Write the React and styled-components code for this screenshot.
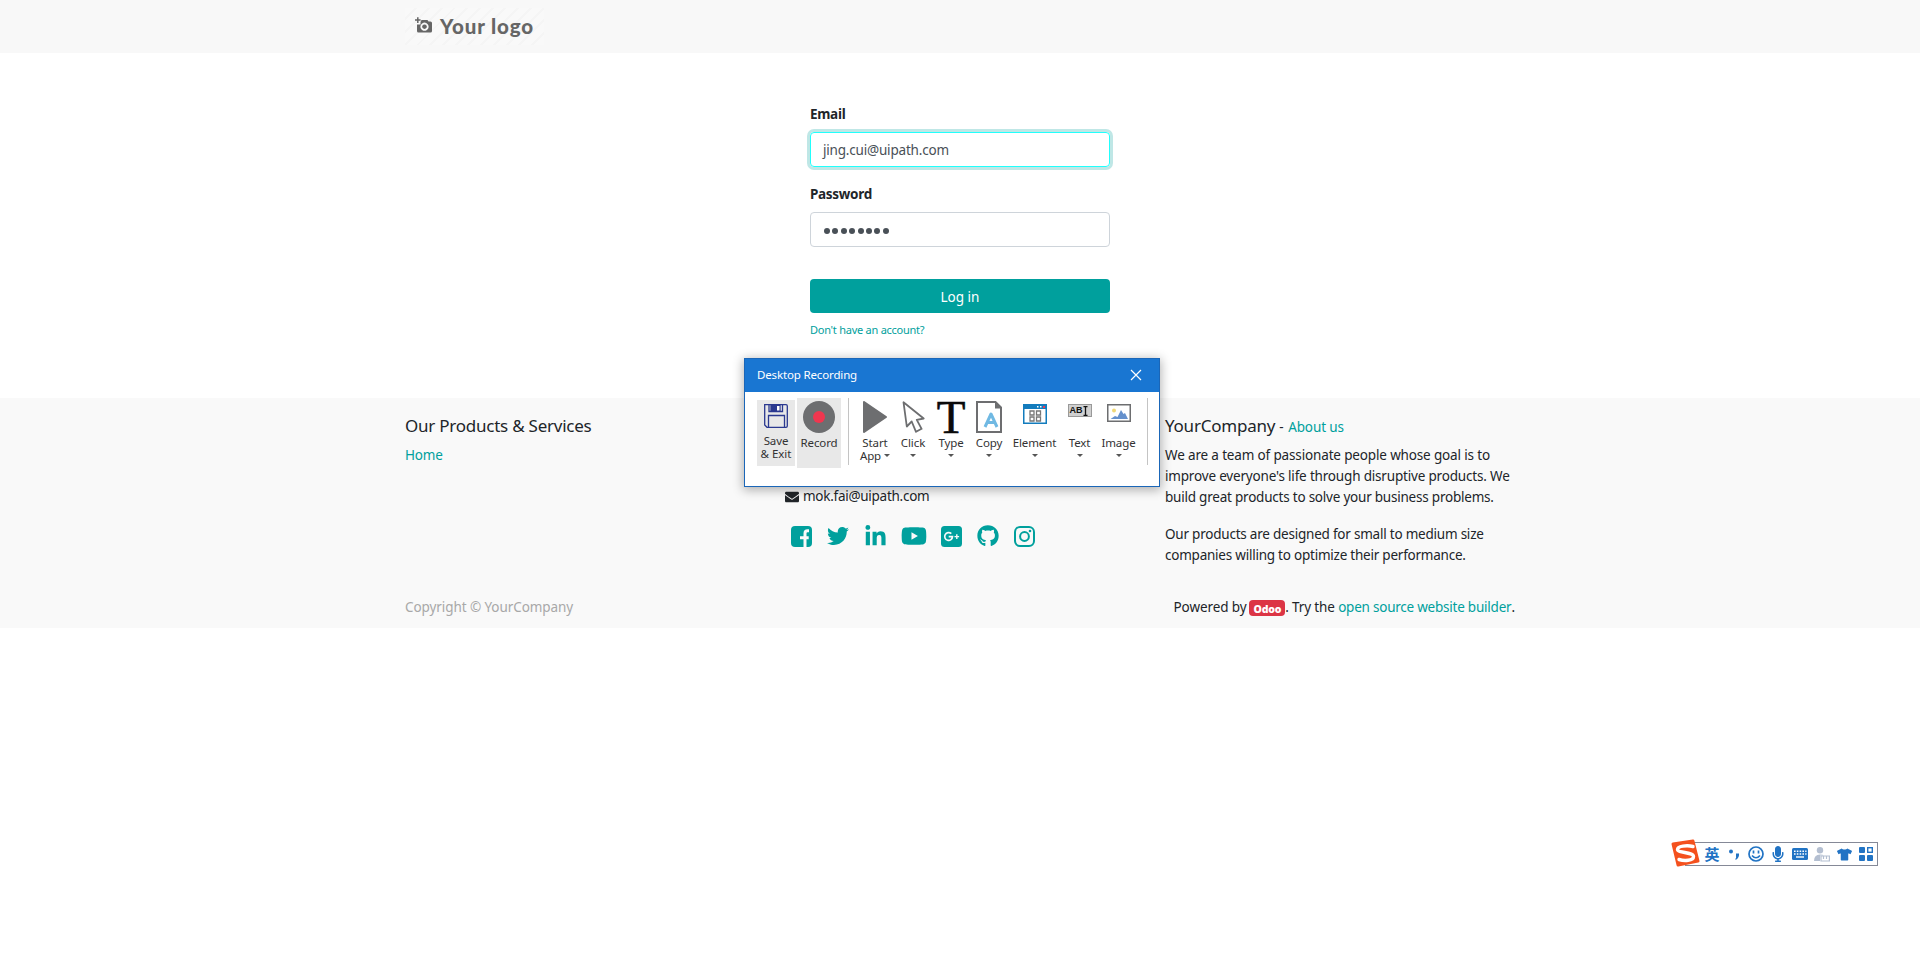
import React from 'react';
import styled, { createGlobalStyle, css } from 'styled-components';
import { FaTwitter, FaLinkedinIn, FaYoutube, FaGithub, FaEnvelope, FaTshirt, FaMicrophone } from 'react-icons/fa';

const TEAL = '#00a09d';

const Global = createGlobalStyle`
  * { box-sizing: border-box; }
  body { margin: 0; background: #fff; color: #212529; font: 14px/21px "Noto Sans", "Open Sans", "Noto Sans CJK SC", sans-serif; }
  h4, p, ul { margin: 0; padding: 0; font-weight: 400; list-style: none; }
  svg { display: block; flex: none; }
`;

/* One line of text; $s is the font size, $ls the tracking */
const Line = styled.span`
  display: inline-block;
  white-space: pre;
  font-size: ${(p) => p.$s || 13.5}px;
  letter-spacing: ${(p) => p.$ls || 0}px;
`;
const Link = styled(Line).attrs({ as: 'a' })`
  color: ${TEAL};
`;

const Header = styled.header`
  height: 53px;
  background: #f8f8f8;
`;
const Container = styled.div`
  width: 1110px;
  margin: 0 auto;
`;
const Logo = styled.div`
  display: flex;
  align-items: center;
  width: 140px;
  height: 53px;
  padding: 0 0 2px 10px;
  background: repeating-linear-gradient(135deg, #f9f9f9 0 7px, #f5f5f5 7px 9px) 0 8px / 139px 37px no-repeat;
  color: #666;
  font: 900 20.5px/26px Lato, sans-serif;
  letter-spacing: 0.85px;
  white-space: nowrap;
  gap: 8px;
`;

const Main = styled.main`
  height: 345px;
  padding-top: 50px;
`;
const Form = styled.form`
  width: 300px;
  margin: 0 auto;
`;
const Label = styled.label`
  display: block;
  height: 21px;
  margin-bottom: 8px;
  font-weight: 700;
`;
const Field = styled.div`
  display: flex;
  align-items: center;
  height: 35px;
  padding: 1px 12px 0;
  margin-bottom: 16px;
  border: 1px solid #ced4da;
  border-radius: 4px;
  color: #495057;
  ${(p) => p.$focus && css`
    border-color: #21fffc;
    box-shadow: 0 0 0 3px #bfe7e6;
  `}
`;
const Dots = styled.div`
  display: flex;
  gap: 2.4px;
  padding: 1px 0 0 1px;
  i { width: 6px; height: 6px; border-radius: 50%; background: #495057; }
`;
const Submit = styled.button`
  display: block;
  width: 300px;
  height: 34px;
  margin: 32px 0 5px;
  padding: 2px 0 0;
  border: 0;
  border-radius: 4px;
  background: ${TEAL};
  color: #fff;
  font: inherit;
`;

const Footer = styled.footer`
  height: 230px;
  background: #f9f9f9;
`;
const Columns = styled.div`
  display: grid;
  grid-template-columns: 380px 380px 350px;
  height: 196px;
  padding-top: 17px;
`;
const Heading = styled.h4`
  height: 29px;
  line-height: 21px;
`;
const Para = styled.p`
  display: flex;
  flex-direction: column;
  align-items: flex-start;
  margin: 1px 0 16.5px;
  line-height: 20.8px;
`;
const Contact = styled.div`
  padding-top: 71px;
`;
const Mail = styled.div`
  display: flex;
  align-items: center;
  gap: 4px;
  height: 21px;
`;
const Socials = styled.div`
  display: flex;
  align-items: center;
  margin: 18px 0 0 6px;
  color: ${TEAL};
`;
const Social = styled.a`
  display: flex;
  align-items: center;
  width: ${(p) => p.$w}px;
  height: 22px;
`;
const Bottom = styled.div`
  display: flex;
  justify-content: space-between;
  align-items: center;
  height: 26px;
`;
const Copyright = styled.span`
  color: #a8a8a8;
`;
const Powered = styled.div`
  display: flex;
  align-items: center;
`;
const Badge = styled.span`
  height: 16px;
  margin: 1px 0 0 3px;
  padding: 0 4px;
  border-radius: 4px;
  background: #dc3545;
  color: #fff;
  font-weight: 900;
  line-height: 16px;
`;

const Window = styled.section`
  position: absolute;
  left: 744px;
  top: 358px;
  width: 416px;
  height: 129px;
  border: 1px solid #1a66b8;
  background: #fff;
  box-shadow: 0 2px 10px 1px rgba(0, 0, 0, 0.3);
`;
const TitleBar = styled.div`
  display: flex;
  align-items: center;
  justify-content: space-between;
  height: 33px;
  padding: 0 17px 2px 12px;
  background: #1976d2;
  color: #fff;
`;
const Ribbon = styled.div`
  display: flex;
  align-items: flex-start;
  padding: 6px 0 0 12px;
`;
const Tool = styled.div`
  display: flex;
  flex-direction: column;
  align-items: center;
  width: ${(p) => p.$w}px;
  height: ${(p) => (p.$save ? 66 : 70)}px;
  margin: ${(p) => (p.$save ? '2px 2px 0 0' : 0)};
  padding-top: 3px;
  background: ${(p) => (p.$on ? '#e8e8e8' : 'none')};
  color: #333;
  line-height: 13px;
`;
const Picture = styled.div`
  display: flex;
  justify-content: center;
  height: ${(p) => p.$h || 35}px;
  padding-top: ${(p) => p.$t || 0}px;
`;
const Row = styled.div`
  display: flex;
  align-items: center;
  height: 13px;
  gap: 3px;
`;
const Caret = styled.i`
  border: solid transparent;
  border-width: 3px 3px 0;
  border-top-color: #555;
`;
const Divider = styled.div`
  width: 1px;
  height: 67px;
  margin: 0 ${(p) => p.$r}px 0 ${(p) => p.$l}px;
  background: #c4c4c4;
`;
const BigT = styled.span`
  display: block;
  font: 47px/32px "Liberation Serif", serif;
  color: #0a0a0a;
  -webkit-text-stroke: 0.6px #0a0a0a;
`;
const TextBadge = styled.div`
  display: flex;
  align-items: center;
  width: 24px;
  height: 13px;
  padding-left: 1px;
  border: 1px solid #999;
  background: #d0d0d0;
  color: #111;
  font: 700 9px/11px "Liberation Sans", sans-serif;
`;

const Ime = styled.aside`
  position: absolute;
  left: 1685px;
  top: 842px;
  display: flex;
  align-items: center;
  width: 193px;
  height: 24px;
  padding-left: 15px;
  border: 1px solid #858997;
  background: #fff;
  color: #2173c4;
`;
const ImeItem = styled.div`
  display: flex;
  justify-content: center;
  align-items: center;
  flex: none;
  width: 22px;
  font: 700 15px/20px "Noto Sans CJK SC", sans-serif;
`;
const Sogou = styled.div`
  position: absolute;
  left: -15px;
  top: -4px;
`;

const Camera = () => (
  <svg width="17" height="17" viewBox="0 0 17 17">
    <path fill="#666" fillRule="evenodd" d="M6.500 3H12.500L13.500 4.500H15.500Q17 4.500 17 6V14Q17 15.500 15.500 15.500H3.500Q2 15.500 2 14V7.500H5.500V5ZM9.500 5.600A4.100 4.100 0 1 0 9.510 5.600ZM9.500 7.400A2.300 2.300 0 1 1 9.490 7.400Z" />
    <path stroke="#666" strokeWidth="1.500" d="M2.800 0.200V6M0 3.100H5.600" />
  </svg>
);

const Save = () => (
  <svg width="24" height="24" viewBox="0 0 24 24" fill="none" stroke="#2b3990" strokeWidth="1.300">
    <path d="M.7.700H22q1.300 0 1.300 1.300v20q0 1.300-1.300 1.300H3L.7 21z" />
    <path d="M5 1v6.500h13.500V1M4.500 23V11.500h16V23" />
    <path fill="#2b3990" d="M7 1h9v6H7z" />
    <path fill="#fff" stroke="none" d="M13 2h2.500v4.500H13z" />
  </svg>
);
const Rec = () => (
  <svg width="32" height="32"><circle cx="16" cy="16" r="16" fill="#6d6e70" /><circle cx="16" cy="16" r="6" fill="#f0364f" /></svg>
);
const Play = () => (
  <svg width="24" height="32"><path fill="#6d6e70" stroke="#6d6e70" strokeWidth="2" strokeLinejoin="round" d="M1 1v30L23 16z" /></svg>
);
const Cursor = () => (
  <svg width="23" height="32" viewBox="0 0 23 32" fill="none" stroke="#6d6e70" strokeWidth="1.800" strokeLinejoin="round">
    <path d="M1.500 1.200 4.800 25.500l4.900-5 4.300 10.300 5.600-3-4.800-9 6.900-1.300z" />
  </svg>
);
const Copy = () => (
  <svg width="26" height="32" viewBox="0 0 26 32" fill="none">
    <path stroke="#6d6e70" strokeWidth="2" d="M1 1h18.500L25 6.500V31H1z" />
    <path fill="#6d6e70" d="M19 1v6.500h6z" />
    <path stroke="#70b9e3" strokeWidth="3" strokeLinejoin="round" d="m9 26 6-13 6 13M11 21.500h8" />
  </svg>
);
const Element = () => (
  <svg width="24" height="20" viewBox="0 0 24 20" fill="none">
    <path stroke="#137cbd" strokeWidth="1.500" fill="#fff" d="M.75.750h22.500v18.500H.750z" />
    <path fill="#137cbd" d="M0 0h24v5H0z" />
    <path fill="#fff" d="M14 2h1.500v1.500H14zM17 2h1.500v1.500H17z" />
    <path fill="#f0364f" d="M20 2h2v2h-2z" />
    <path stroke="#777" strokeWidth="1.300" d="M7 7h4v4H7zM13.500 7h4v4h-4zM7 13h4v4H7zM13.500 13h4v4h-4z" />
  </svg>
);
const ImageIcon = () => (
  <svg width="24" height="18" viewBox="0 0 24 18">
    <path fill="#fff" stroke="#6d6e70" strokeWidth="1.500" d="M.75.750h22.500v16.500H.750z" />
    <circle cx="7" cy="6.500" r="2" fill="#f0d878" />
    <path fill="#6590cc" d="M3.500 15 8 12l2.500 1L14 6l2.500 4L18 9l3 6z" />
  </svg>
);
const Cross = () => (
  <svg width="12" height="12" stroke="#fff" strokeWidth="1.200"><path d="m1 1 10 10M11 1 1 11" /></svg>
);
const IBeam = () => (
  <svg width="5" height="10" fill="none" stroke="#111" strokeWidth="1.300"><path d="M.5.700h4M.5 9.300h4M2.500.700v8.600" /></svg>
);
const Facebook = () => (
  <svg width="21" height="21" viewBox="0 0 21 21" fill="none">
    <rect width="21" height="21" rx="4" fill={TEAL} />
    <path stroke="#f9f9f9" strokeWidth="3" d="M18 4.700h-1.500q-2.500 0-2.500 2.600V21M9 11.800h8.700" />
  </svg>
);
const Instagram = () => (
  <svg width="21" height="21" viewBox="0 0 21 21" fill="none" stroke={TEAL} strokeWidth="2">
    <rect x="1" y="1" width="19" height="19" rx="5" />
    <circle cx="10.500" cy="10.500" r="4.400" />
    <circle cx="16" cy="5" r="1.300" fill={TEAL} stroke="none" />
  </svg>
);
const GooglePlus = () => (
  <svg width="21" height="21" viewBox="0 0 21 21" fill="none">
    <rect width="21" height="21" rx="3.500" fill={TEAL} />
    <path stroke="#f9f9f9" strokeWidth="1.700" d="M10.300 7.700A3.900 3.900 0 1 0 11.500 10.600H7.700" />
    <path stroke="#f9f9f9" strokeWidth="1.400" d="M13.500 10.600h4.600M15.800 8.300v4.600" />
  </svg>
);
const SogouMark = () => (
  <svg width="29" height="29" viewBox="0 0 29 29" fill="none">
    <path fill="#f4511e" stroke="#f4511e" strokeWidth="3" strokeLinejoin="round" d="M2 5 22 2l5 20-20 4z" />
    <path stroke="#fff" strokeWidth="3.400" strokeLinecap="round" d="M22 7.500C16 6 6.500 7 6.500 10.500S22.500 13 22.500 17.500 13 22 8 20.500" />
  </svg>
);
const Smile = () => (
  <svg width="16" height="16" fill="none" stroke="currentColor" strokeWidth="1.700">
    <circle cx="8" cy="8" r="7" /><path d="M5.500 4.500v3M10.500 4.500v3M4 9.500q4 4.500 8 0" />
  </svg>
);
const Comma = () => (
  <svg width="12" height="12" fill="currentColor"><circle cx="3" cy="3.500" r="2" /><path d="M8 5.500h3q.500 3.500-2.500 6H7Q8.700 9.500 8 8z" /></svg>
);
const Keyboard = () => (
  <svg width="16" height="12" fill="none">
    <rect width="16" height="12" rx="1.500" fill="currentColor" />
    <path stroke="#fff" strokeWidth="1.400" strokeDasharray="1.600 1.200" d="M2 3.200h12.500M2 6h12.500" /><path stroke="#fff" strokeWidth="1.400" d="M4 9h8" />
  </svg>
);
const Person = () => (
  <svg width="16" height="15" fill="#b4bfd1">
    <circle cx="6" cy="3.200" r="3.200" /><path d="M0 14q0-6.500 6-6.500 3 0 4 1H6V14z" />
    <path fill="#fff" stroke="#b4bfd1" strokeWidth="1.200" d="M7 9h8.400v5H7zM9.500 9v3M12.500 9v3" />
  </svg>
);
const Grid = () => (
  <svg width="14" height="14" fill="currentColor"><rect width="6" height="6" rx="1" /><rect y="8" width="6" height="6" rx="1" /><rect x="8" y="8" width="6" height="6" rx="1" /><rect x="8.700" y=".7" width="4.600" height="4.600" fill="#fff" stroke="currentColor" strokeWidth="1.400" /></svg>
);

const tools = [
  { label: 'Click', w: 38, icon: <Cursor /> },
  { label: 'Type', w: 38, icon: <BigT>T</BigT> },
  { label: 'Copy', w: 38, icon: <Copy /> },
  { label: 'Element', w: 53, icon: <Element />, t: 3 },
  { label: 'Text', w: 37, icon: <TextBadge>AB<IBeam /></TextBadge>, t: 3 },
  { label: 'Image', w: 41, icon: <ImageIcon />, t: 3 },
];

export default function App() {
  return (
    <>
      <Global />
      <Header>
        <Container>
          <Logo><Camera />Your logo</Logo>
        </Container>
      </Header>
      <Main>
        <Form>
          <Label><Line $ls={-0.3}>Email</Line></Label>
          <Field $focus><Line $ls={-0.19}>jing.cui@uipath.com</Line></Field>
          <Label><Line $ls={-0.3}>Password</Line></Label>
          <Field><Dots>{Array.from({ length: 8 }, (_, i) => <i key={i} />)}</Dots></Field>
          <Submit type="button"><Line>Log in</Line></Submit>
          <Link $s={11} $ls={-0.25}>Don't have an account?</Link>
        </Form>
      </Main>
      <Footer>
        <Container>
          <Columns>
            <div>
              <Heading><Line $s={17} $ls={-0.24}>Our Products &amp; Services</Line></Heading>
              <Link $ls={-0.15}>Home</Link>
            </div>
            <Contact>
              <Mail><FaEnvelope size={14} /><Line $ls={-0.27}>mok.fai@uipath.com</Line></Mail>
              <Socials>
                <Social $w={36}><Facebook /></Social>
                <Social $w={37}><FaTwitter size={22} /></Social>
                <Social $w={37}><FaLinkedinIn size={23} /></Social>
                <Social $w={40}><FaYoutube size={26} /></Social>
                <Social $w={36}><GooglePlus /></Social>
                <Social $w={37}><FaGithub size={22} /></Social>
                <Social $w={22}><Instagram /></Social>
              </Socials>
            </Contact>
            <div>
              <Heading><Line $s={17} $ls={-0.22}>YourCompany</Line><Line $ls={0.5}> - </Line><Link $ls={-0.1}>About us</Link></Heading>
              <Para>
                <Line $ls={-0.15}>We are a team of passionate people whose goal is to</Line>
                <Line $ls={-0.18}>improve everyone's life through disruptive products. We</Line>
                <Line $ls={-0.22}>build great products to solve your business problems.</Line>
              </Para>
              <Para>
                <Line $ls={-0.22}>Our products are designed for small to medium size</Line>
                <Line $ls={-0.23}>companies willing to optimize their performance.</Line>
              </Para>
            </div>
          </Columns>
          <Bottom>
            <Copyright><Line $ls={-0.08}>Copyright © YourCompany</Line></Copyright>
            <Powered>
              <Line $ls={-0.1}>Powered by</Line>
              <Badge><Line $s={10.5} $ls={-0.2}>Odoo</Line></Badge>
              <Line $ls={-0.13}>. Try the </Line>
              <Link $ls={-0.23}>open source website builder</Link>
              <Line>.</Line>
            </Powered>
          </Bottom>
        </Container>
      </Footer>
      <Window>
        <TitleBar><Line $s={11.5} $ls={-0.15}>Desktop Recording</Line><Cross /></TitleBar>
        <Ribbon>
          <Tool $w={38} $on $save>
            <Picture $t={1} $h={31}><Save /></Picture>
            <Row><Line $s={11.5} $ls={-0.1}>Save</Line></Row>
            <Row><Line $s={11.5}>&amp; Exit</Line></Row>
          </Tool>
          <Tool $w={44} $on>
            <Picture><Rec /></Picture>
            <Row><Line $s={11.5} $ls={-0.1}>Record</Line></Row>
          </Tool>
          <Divider $l={7} $r={7} />
          <Tool $w={38}>
            <Picture><Play /></Picture>
            <Row><Line $s={11.5} $ls={-0.1}>Start</Line></Row>
            <Row><Line $s={11.5} $ls={-0.1}>App</Line><Caret /></Row>
          </Tool>
          {tools.map((t) => (
            <Tool key={t.label} $w={t.w}>
              <Picture $t={t.t}>{t.icon}</Picture>
              <Row><Line $s={11.5} $ls={-0.1}>{t.label}</Line></Row>
              <Row><Caret /></Row>
            </Tool>
          ))}
          <Divider $l={8} $r={0} />
        </Ribbon>
      </Window>
      <Ime>
        <Sogou><SogouMark /></Sogou>
        <ImeItem>英</ImeItem>
        <ImeItem><Comma /></ImeItem>
        <ImeItem><Smile /></ImeItem>
        <ImeItem><FaMicrophone size={16} /></ImeItem>
        <ImeItem><Keyboard /></ImeItem>
        <ImeItem><Person /></ImeItem>
        <ImeItem><FaTshirt size={15} /></ImeItem>
        <ImeItem><Grid /></ImeItem>
      </Ime>
    </>
  );
}
